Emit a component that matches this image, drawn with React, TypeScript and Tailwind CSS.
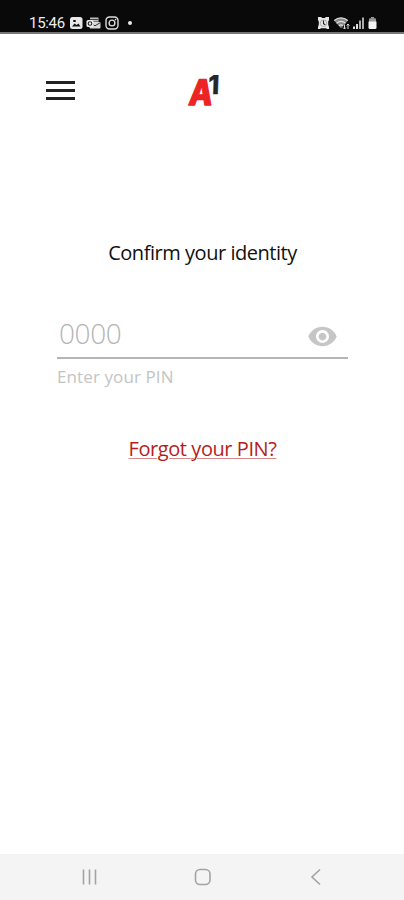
import { useState } from 'react';

const StatusIcons = () => (
  <svg width="52" height="14" viewBox="0 0 52 14" fill="none" aria-hidden="true">
    {/* Image */}
    <rect x="1" y="1" width="12.5" height="12" rx="2.5" fill="#e8e8e8" />
    <path d="M3 10.5l2.6-3 2 1.6 1.8-1.6 2.1 3z" fill="#111" />
    <rect x="4" y="4" width="3" height="2" rx="1" fill="#111" />
    {/* Mail */}
    <rect x="21" y="1.5" width="8.5" height="7" fill="#bbb" />
    <path d="M21 3.5h8M24 6h6" stroke="#444" />
    <rect x="20.5" y="6" width="11" height="6.5" rx="1" fill="#d8d8d8" />
    <path d="M21 6.8l5 3 5-3" stroke="#333" />
    <rect x="17.5" y="4" width="7" height="7" rx="1.5" fill="#eee" />
    <circle cx="21" cy="7.5" r="1.8" stroke="#222" strokeWidth="1.1" />
    {/* Camera */}
    <rect x="37" y="1" width="12" height="12" rx="3.5" stroke="#ddd" strokeWidth="1.4" />
    <circle cx="43" cy="7" r="2.9" stroke="#ddd" strokeWidth="1.4" />
    <circle cx="46.6" cy="3.6" r=".8" fill="#ddd" />
  </svg>
);

const SignalIcons = () => (
  <svg width="62" height="14" viewBox="0 0 62 14" fill="none" aria-hidden="true">
    {/* Alarm */}
    <path d="M1 1h3l1.3 1h2.4L9 1h3v3l-.8 1.5v3L12 11v2h-2l-1-.7H4L3 13H1v-2l.8-2.5v-3L1 4z" fill="#e6e6e6" />
    <path d="M6.5 4.5v3.2l1.8 1" stroke="#222" strokeWidth="1.1" />
    <circle cx="6.5" cy="7.2" r="3.3" stroke="#888" strokeWidth=".6" />
    {/* Wifi */}
    <path d="M17 4.5c4-3.7 10-3.7 14 0l-7 7.8z" fill="#888" />
    <path d="M17.3 4.5c4-3.4 9.4-3.4 13.4 0M19.5 7.2c2.8-2.3 6.2-2.3 9 0M22 9.7c1.4-1 2.6-1 4 0" stroke="#ddd" strokeWidth="1.2" />
    <path d="M27.5 13V8.5M26 11.5l1.5 1.5 1.4-1.5M31 8v5M29.7 9.5L31 8l1.3 1.5" stroke="#ddd" />
    {/* Signal */}
    <path d="M37 13v-2.5M40 13V8" stroke="#ddd" strokeWidth="2" />
    <path d="M43 13V4.5M46 13V1.5" stroke="#aaa" strokeWidth="2" />
    {/* Battery */}
    <path d="M54 1h3v1.5h-3z" fill="#999" />
    <path d="M52 3.5c0-.8.5-1.2 1.2-1.2h4.6c.7 0 1.2.4 1.2 1.2V6h-7z" fill="#999" />
    <path d="M51.5 5.5h8v6.3c0 .7-.5 1.2-1.2 1.2h-5.6c-.7 0-1.2-.5-1.2-1.2z" fill="#f4f4f4" />
  </svg>
);

const Logo = () => (
  <svg width="36" height="40" viewBox="0 0 36 40" overflow="visible" role="img" aria-label="A1" className="font-['Inter',sans-serif]">
    <g transform="translate(2 34.5) skewX(-7)">
      <text x="0" y="0" fontSize="35" fontWeight="800" fill="#ed2424" stroke="#ed2424" strokeWidth="1.4" strokeLinejoin="round" textLength="23.5" lengthAdjust="spacingAndGlyphs">A</text>
    </g>
    <g transform="translate(22 23.5) skewX(-2)">
      <text x="0" y="0" fontSize="26" fontWeight="800" fill="#26262a" stroke="#26262a" strokeWidth=".4" textLength="11" lengthAdjust="spacingAndGlyphs">1</text>
    </g>
  </svg>
);

const EyeIcon = () => (
  <svg width="31" height="31" viewBox="0 0 24 24" fill="#c6c6c6" aria-hidden="true">
    <path d="M12 4.5C7 4.5 2.73 7.61 1 12c1.73 4.39 6 7.5 11 7.5s9.27-3.11 11-7.5c-1.73-4.39-6-7.5-11-7.5zM12 17c-2.76 0-5-2.24-5-5s2.24-5 5-5 5 2.24 5 5-2.24 5-5 5zm0-8c-1.66 0-3 1.34-3 3s1.34 3 3 3 3-1.34 3-3-1.34-3-3-3z" />
  </svg>
);

export default function App() {
  const [showPin, setShowPin] = useState(false);

  return (
    <div className="h-[900px] w-[404px] overflow-hidden flex flex-col bg-white font-['Open_Sans',sans-serif]">
      {/* Status bar */}
      <div className="h-[34px] shrink-0 flex items-start justify-between bg-[#090909] border-b-2 border-[#777] pt-[15px] pl-[29px] pr-[25px]">
        <div className="flex items-center h-4">
          <span className="w-10 text-[15px] leading-4 tracking-[-0.3px] font-normal text-[#ececec] font-['Roboto',sans-serif]">15:46</span>
          <StatusIcons />
          <span className="ml-[7px] size-1 rounded-full bg-[#e8e8e8]" />
        </div>
        <div className="flex items-center h-4">
          <SignalIcons />
        </div>
      </div>

      {/* Header */}
      <header className="h-28 shrink-0 flex items-center pl-[46px]">
        <button type="button" aria-label="Menu" className="w-[29px] flex flex-col gap-[5px]">
          <span className="h-[3px] w-full bg-[#222]" />
          <span className="h-[3px] w-full bg-[#222]" />
          <span className="h-[3px] w-full bg-[#222]" />
        </button>
        <div className="ml-[111px]">
          <Logo />
        </div>
      </header>

      {/* PIN form */}
      <main className="flex-1 flex flex-col pl-[57px] pr-14 pt-[93px]">
        <h1 className="text-center text-[20px] leading-7 tracking-[-0.46px] text-[#111]">Confirm your identity</h1>
        <div className="mt-[47px] h-[45px] flex items-start justify-between border-b-2 border-[#b5b5b5] pl-[2px] pr-[10px]">
          <span className="mt-[1px] text-[28px] leading-9 tracking-[-0.4px] font-light text-[#b4b4b4]">0000</span>
          <button type="button" aria-label="Show PIN" aria-pressed={showPin} onClick={() => setShowPin(!showPin)} className="mt-[7px]">
            <EyeIcon />
          </button>
        </div>
        <p className="mt-[6px] text-[17px] leading-6 tracking-[0.1px] text-[#c4c4c4]">Enter your PIN</p>
        <a href="#" className="mt-[46px] self-center text-[20px] leading-7 tracking-[-0.43px] text-[#b51d1d] underline decoration-1 underline-offset-2 decoration-[#d98a8a]">
          Forgot your PIN?
        </a>
      </main>

      {/* Navigation bar */}
      <nav className="h-[46px] shrink-0 flex items-center bg-[#f4f4f4] pl-[81px]">
        <svg width="18" height="18" viewBox="0 0 18 18" stroke="#a3a3a3" strokeWidth="1.6">
          <path d="M2.5 1.5v15M8.5 1.5v15M14.5 1.5v15" />
        </svg>
        <svg width="18" height="18" viewBox="0 0 18 18" fill="none" stroke="#a3a3a3" strokeWidth="1.6" className="ml-[95px]">
          <rect x="1.5" y="1.5" width="14.5" height="15" rx="4.5" />
        </svg>
        <svg width="18" height="18" viewBox="0 0 18 18" fill="none" stroke="#a3a3a3" strokeWidth="1.6" className="ml-[95px]">
          <path d="M13 1.5L5 9l8 7.5" />
        </svg>
      </nav>
    </div>
  );
}
